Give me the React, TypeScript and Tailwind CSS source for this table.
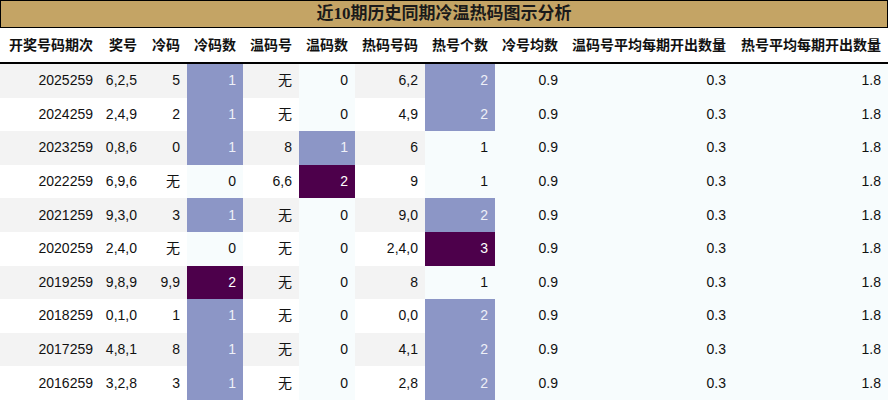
const COLS = "grid-cols-[100px_44px_43px_56px_56px_56px_70px_70px_70px_168px_155px]";

const headers = [
  "开奖号码期次",
  "奖号",
  "冷码",
  "冷码数",
  "温码号",
  "温码数",
  "热码号码",
  "热号个数",
  "冷号均数",
  "温码号平均每期开出数量",
  "热号平均每期开出数量",
];

type Row = [string, string, string, number, string, number, string, number];

const rows: Row[] = [
  ["2025259", "6,2,5", "5", 1, "无", 0, "6,2", 2],
  ["2024259", "2,4,9", "2", 1, "无", 0, "4,9", 2],
  ["2023259", "0,8,6", "0", 1, "8", 1, "6", 1],
  ["2022259", "6,9,6", "无", 0, "6,6", 2, "9", 1],
  ["2021259", "9,3,0", "3", 1, "无", 0, "9,0", 2],
  ["2020259", "2,4,0", "无", 0, "无", 0, "2,4,0", 3],
  ["2019259", "9,8,9", "9,9", 2, "无", 0, "8", 1],
  ["2018259", "0,1,0", "1", 1, "无", 0, "0,0", 2],
  ["2017259", "4,8,1", "8", 1, "无", 0, "4,1", 2],
  ["2016259", "3,2,8", "3", 1, "无", 0, "2,8", 2],
];

// BuPu heat cell: low / mid / high
function heat(level: 0 | 1 | 2) {
  if (level === 2) return "bg-[#4d004b] text-white";
  if (level === 1) return "bg-[#8c96c6] text-[#eef0f8]";
  return "bg-[#f7fcfd] text-[#111]";
}

function Cell({ children, cls = "" }: { children: React.ReactNode; cls?: string }) {
  return (
    <div className={`flex items-center justify-end pr-[7px] pl-[7px] whitespace-nowrap ${cls}`}>
      {children}
    </div>
  );
}

export default function App() {
  return (
    <div className="w-[888px] h-[401px] bg-white overflow-hidden" style={{ fontFamily: '"Liberation Sans", "Noto Sans CJK SC", sans-serif' }}>
      <div
        className="h-[28px] border border-black bg-[#c4a465] flex items-center justify-center text-[17px] font-bold text-[#1a1a1a]"
        style={{ fontFamily: '"Liberation Serif", "Noto Sans CJK SC", serif' }}
      >
        近10期历史同期冷温热码图示分析
      </div>

      <div className={`grid ${COLS} h-[36px] border-b-2 border-black text-[14px] font-bold text-[#111]`}>
        {headers.map((h) => (
          <Cell key={h}>{h}</Cell>
        ))}
      </div>

      {rows.map((r, i) => {
        const stripe = i % 2 === 0 ? "bg-[#f3f3f3]" : "bg-white";
        const cold = r[3] as 0 | 1 | 2;
        const warm = r[5] as 0 | 1 | 2;
        const hot = (r[7] - 1) as 0 | 1 | 2;
        return (
          <div key={r[0]} className={`grid ${COLS} h-[33.6px] text-[14px] text-[#111]`}>
            <Cell cls={stripe}>{r[0]}</Cell>
            <Cell cls={stripe}>{r[1]}</Cell>
            <Cell cls={stripe}>{r[2]}</Cell>
            <Cell cls={heat(cold)}>{r[3]}</Cell>
            <Cell cls={stripe}>{r[4]}</Cell>
            <Cell cls={heat(warm)}>{r[5]}</Cell>
            <Cell cls={stripe}>{r[6]}</Cell>
            <Cell cls={heat(hot)}>{r[7]}</Cell>
            <Cell cls={heat(0)}>0.9</Cell>
            <Cell cls={heat(0)}>0.3</Cell>
            <Cell cls={heat(0)}>1.8</Cell>
          </div>
        );
      })}
    </div>
  );
}
